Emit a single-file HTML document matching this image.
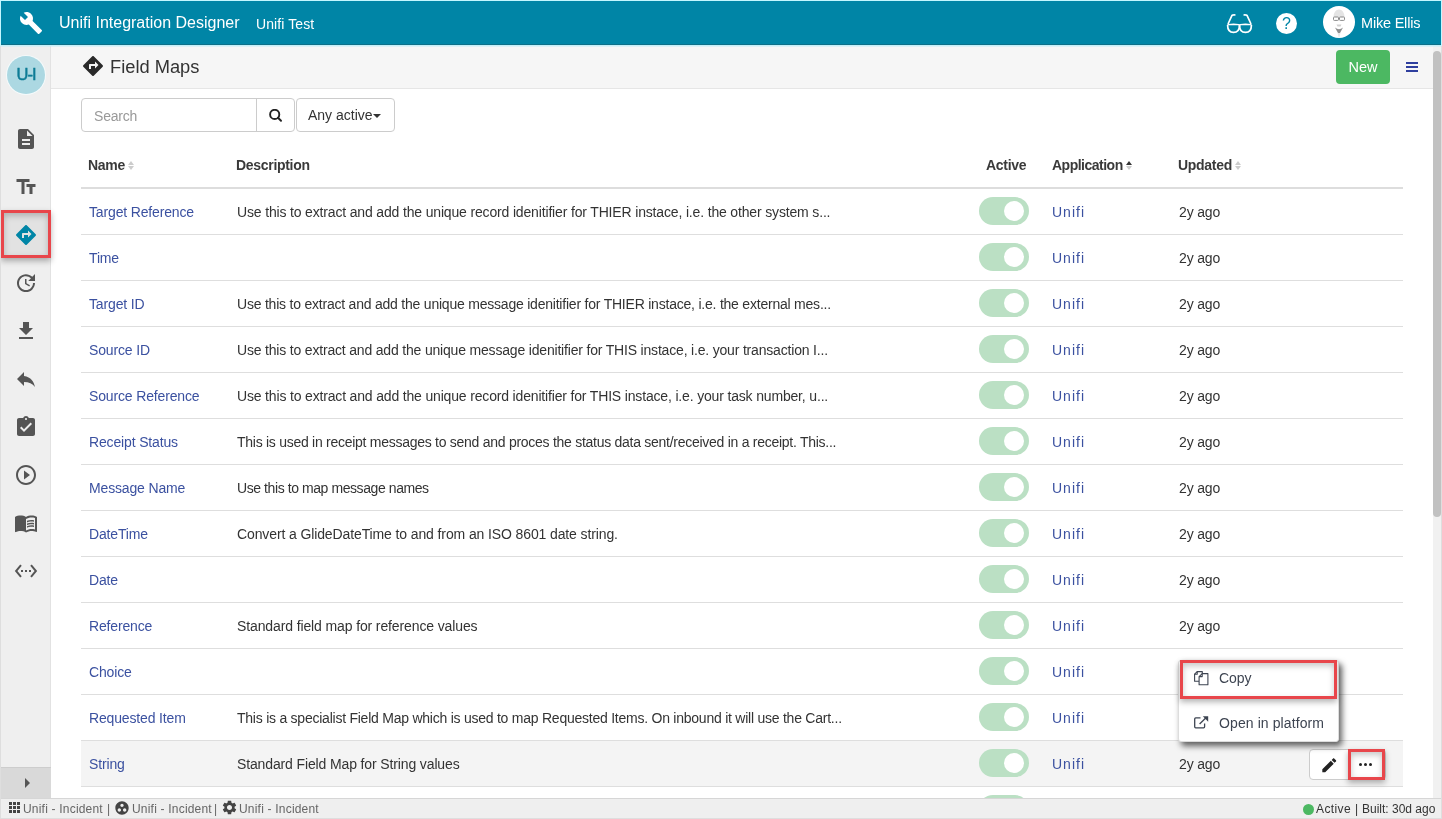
<!DOCTYPE html>
<html><head><meta charset="utf-8">
<style>
*{box-sizing:border-box;margin:0;padding:0}
html,body{width:1442px;height:819px;overflow:hidden;background:#dedede;font-family:"Liberation Sans",sans-serif;}
#frame{position:absolute;left:1px;top:1px;width:1440px;height:817px;background:#fff;overflow:hidden;will-change:transform}
.abs{position:absolute}
#hdr{position:absolute;left:0;top:0;width:1440px;height:44px;background:#0085a6;color:#fff;border-bottom:1px solid #0d6f88;z-index:5}
#hdr .t1{position:absolute;left:58px;top:12px;font-size:16px;line-height:20px;white-space:nowrap}
#hdr .t2{position:absolute;left:255px;top:14px;font-size:14px;letter-spacing:0.1px;line-height:18px;white-space:nowrap}
#hdr .me{position:absolute;left:1360px;top:13px;font-size:14.5px;line-height:18px;white-space:nowrap;letter-spacing:-0.2px}
#side{position:absolute;left:0;top:44px;width:50px;height:753px;background:#efefef;border-right:1px solid #e2e2e2}
#title{position:absolute;left:50px;top:44px;width:1382px;height:44px;background:#f6f6f6;border-bottom:1px solid #e6e6e6}
#title .tx{position:absolute;left:59px;top:11px;font-size:18.3px;line-height:22px;color:#333;white-space:nowrap}
#scroll{position:absolute;left:1432px;top:44px;width:8px;height:753px;background:#f1f1f1}
#thumb{position:absolute;left:0px;top:6px;width:8px;height:466px;background:#c1c1c1;border-radius:4px}
#foot{position:absolute;left:0;top:797px;width:1440px;height:20px;background:#efefef;border-top:1px solid #d6d6d6;font-size:12px;color:#666}
#foot .ft{position:absolute;top:3px;line-height:15px;white-space:nowrap}
.row{position:absolute;left:80px;width:1322px;height:46px;border-bottom:1px solid #dedede;font-size:14px;letter-spacing:-0.15px;color:#333}
.row.hl{background:#f4f4f4}
.row .n{position:absolute;left:8px;top:14px;line-height:18px;color:#3b51a0;white-space:nowrap}
.row .d{position:absolute;left:156px;top:14px;line-height:18px;white-space:nowrap}
.row .a{position:absolute;left:971px;top:14px;line-height:18px;color:#3b51a0;letter-spacing:1px}
.row .u{position:absolute;left:1098px;top:14px;line-height:18px;white-space:nowrap}
.tog{position:absolute;left:898px;top:8px;width:50px;height:28px;border-radius:14px;background:#bbe0c4}
.tog::after{content:"";position:absolute;left:25px;top:4px;width:20px;height:20px;border-radius:50%;background:#fff}
.th{position:absolute;top:155px;font-size:14px;font-weight:bold;line-height:18px;color:#3a3a3a;letter-spacing:-0.3px;white-space:nowrap}
.red{position:absolute;border:3px solid #e8464b;box-shadow:inset 0 3px 6px rgba(0,0,0,.22), 0 3px 6px rgba(0,0,0,.3)}
.srt{position:absolute;width:0;height:0;border-left:3px solid transparent;border-right:3px solid transparent}
</style></head><body>
<div class="abs" style="left:0;top:0;width:1442px;height:46px;background:#c4f7ff"></div>
<div id="frame">
  <div id="hdr">
    <svg class="abs" style="left:18px;top:10px" width="24" height="24" viewBox="0 0 24 24" ><path fill="#fff" d="M22.7 19l-9.1-9.1c.9-2.3.4-5-1.5-6.9-2-2-5-2.4-7.4-1.3L9 6 6 9 1.6 4.7C.4 7.1.9 10.1 2.9 12.1c1.9 1.9 4.6 2.4 6.9 1.5l9.1 9.1c.4.4 1 .4 1.4 0l2.3-2.3c.5-.4.5-1.1.1-1.4z"/></svg>
    <div class="t1">Unifi Integration Designer</div>
    <div class="t2">Unifi Test</div>
    <svg class="abs" style="left:1224px;top:11px" width="29" height="22" viewBox="0 0 29 22"><g fill="none" stroke="#fff" stroke-width="1.7" stroke-linejoin="round"><path d="M2.6 13.2 C2.6 12 14.5 12 14.5 13.2 C14.5 18 12 20.4 8.5 20.4 C5 20.4 2.6 18 2.6 13.2 Z"/><path d="M14.5 13.2 C14.5 12 26.4 12 26.4 13.2 C26.4 18 24 20.4 20.5 20.4 C17 20.4 14.5 18 14.5 13.2 Z"/><path d="M3 12 L7 3.4 Q7.6 2.8 10.5 3"/><path d="M26 12 L22 3.4 Q21.4 2.8 18.5 3"/></g></svg>
    <div class="abs" style="left:1275px;top:12px;width:21px;height:21px;border-radius:50%;background:#fff"></div>
    <div class="abs" style="left:1275px;top:12px;width:21px;height:21px;font-size:16px;line-height:21px;text-align:center;color:#0085a6">?</div>
    <svg class="abs" style="left:1322px;top:5px" width="32" height="32" viewBox="0 0 32 32"><circle cx="16" cy="16" r="16" fill="#fff"/><path d="M10.5 11 Q11 3.5 16 3.5 Q21 3.5 21.5 11 Z" fill="#e4e4e4"/><rect x="10.5" y="11" width="5" height="3.4" rx="0.8" fill="none" stroke="#8a8a8a" stroke-width="1"/><rect x="16.5" y="11" width="5" height="3.4" rx="0.8" fill="none" stroke="#8a8a8a" stroke-width="1"/><path d="M13.5 18.5h5l-1 2h-3z" fill="#cfcfcf"/><path d="M12 21.5 Q16 25 20 21.5 L17 27 Q16 28 15 27 Z" fill="#8f8f8f"/><path d="M14.5 27 L16 32 L17.5 27 Z" fill="#e8e8e8"/></svg>
    <div class="me">Mike Ellis</div>
  </div>
  <div id="side">
    <div class="abs" style="left:6px;top:11px;width:38px;height:38px;border-radius:50%;background:#acd8e2;color:#0e7c96;font-size:16.5px;-webkit-text-stroke:0.5px #0e7c96;line-height:36px;text-align:center;letter-spacing:-1px;box-shadow:0 0 0 1px #f4fafb">U-I</div>
  </div>
  <div class="abs" style="left:0;top:0"><svg class="abs" style="left:13.0px;top:126.0px" width="24" height="24" viewBox="0 0 24 24" ><path fill="#555" d="M14 2H6c-1.1 0-1.99.9-1.99 2L4 20c0 1.1.89 2 1.99 2H18c1.1 0 2-.9 2-2V8l-6-6zm2 16H8v-2h8v2zm0-4H8v-2h8v2zm-3-5V3.5L18.5 9H13z"/></svg><svg class="abs" style="left:13.0px;top:174.0px" width="24" height="24" viewBox="0 0 24 24" ><path fill="#555" d="M2.5 4v3h5v12h3V7h5V4h-13zm19 5h-9v3h3v7h3v-7h3V9z"/></svg><svg class="abs" style="left:13.0px;top:270.0px" width="24" height="24" viewBox="0 0 24 24" ><path fill="#555" d="M21 10.12h-6.78l2.74-2.82c-2.73-2.7-7.15-2.8-9.88-.1-2.73 2.71-2.73 7.08 0 9.79s7.150 2.71 9.88 0C18.32 15.65 19 14.08 19 12.1h2c0 1.98-.88 4.55-2.64 6.29-3.51 3.48-9.21 3.48-12.72 0-3.5-3.47-3.53-9.11-.02-12.58s9.14-3.47 12.65 0L21 3v7.12zM12.5 8v4.25l3.5 2.08-.72 1.21L11 13V8h1.5z"/></svg><svg class="abs" style="left:13.0px;top:318.0px" width="24" height="24" viewBox="0 0 24 24" ><path fill="#555" d="M19 9h-4V3H9v6H5l7 7 7-7zM5 18v2h14v-2H5z"/></svg><svg class="abs" style="left:13.0px;top:366.0px" width="24" height="24" viewBox="0 0 24 24" ><path fill="#555" d="M10 9V5l-7 7 7 7v-4.1c5 0 8.5 1.6 11 5.1-1-5-4-10-11-11z"/></svg><svg class="abs" style="left:13.0px;top:414.0px" width="24" height="24" viewBox="0 0 24 24" ><path fill="#555" d="M19 3h-4.18C14.4 1.84 13.3 1 12 1c-1.3 0-2.4.84-2.82 2H5c-1.1 0-2 .9-2 2v14c0 1.1.9 2 2 2h14c1.1 0 2-.9 2-2V5c0-1.1-.9-2-2-2zm-7 0c.55 0 1 .45 1 1s-.45 1-1 1-1-.45-1-1 .45-1 1-1zm-2 14l-4-4 1.41-1.41L10 14.17l6.59-6.59L18 9l-8 8z"/></svg><svg class="abs" style="left:13.0px;top:462.0px" width="24" height="24" viewBox="0 0 24 24" ><path fill="#555" d="M10 16.5l6-4.5-6-4.5v9zM12 2C6.48 2 2 6.48 2 12s4.48 10 10 10 10-4.48 10-10S17.52 2 12 2zm0 18c-4.41 0-8-3.590-8-8s3.59-8 8-8 8 3.59 8 8-3.59 8-8 8z"/></svg><svg class="abs" style="left:13.0px;top:510.0px" width="24" height="24" viewBox="0 0 24 24" ><path fill="#555" d="M21 5c-1.11-.35-2.33-.5-3.5-.5-1.95 0-4.05.4-5.5 1.5-1.45-1.1-3.55-1.5-5.5-1.5S2.45 4.9 1 6v14.65c0 .25.25.5.5.5.1 0 .15-.05.25-.05C3.1 20.45 5.05 20 6.5 20c1.95 0 4.05.4 5.5 1.5 1.35-.85 3.8-1.5 5.5-1.5 1.65 0 3.35.3 4.75 1.05.1.05.15.05.25.05.25 0 .5-.25.5-.5V6c-.6-.45-1.25-.75-2-1zm0 13.5c-1.1-.35-2.3-.5-3.5-.5-1.7 0-4.15.65-5.5 1.5V8c1.35-.85 3.8-1.5 5.5-1.5 1.2 0 2.4.15 3.5.5v11.5zM17.5 10.5c.88 0 1.73.09 2.5.26V9.24c-.79-.15-1.64-.24-2.5-.24-1.7 0-3.24.29-4.5.83v1.66c1.13-.64 2.7-.99 4.5-.99zM13 12.49v1.66c1.130-.64 2.7-.99 4.5-.99.88 0 1.73.09 2.5.26V11.9c-.79-.15-1.64-.24-2.5-.24-1.7 0-3.24.3-4.5.83zM17.5 14.33c-1.7 0-3.24.29-4.5.83v1.66c1.13-.64 2.7-.99 4.5-.99.88 0 1.73.09 2.5.26v-1.52c-.79-.16-1.64-.24-2.5-.24z"/></svg><svg class="abs" style="left:13.0px;top:558.0px" width="24" height="24" viewBox="0 0 24 24" ><path fill="#555" d="M7.77 6.76L6.23 5.48.82 12l5.41 6.52 1.54-1.28L3.42 12l4.35-5.24zM7 13h2v-2H7v2zm10-2h-2v2h2v-2zm-6 2h2v-2h-2v2zm6.77-7.52l-1.54 1.28L20.58 12l-4.35 5.24 1.54 1.28L23.18 12l-5.41-6.52z"/></svg></div>
  <div class="abs" style="left:3px;top:212px;width:45px;height:42px;background:#e2e2e2"></div>
  <svg class="abs" style="left:13px;top:222px" width="24" height="24" viewBox="0 0 24 24" ><path fill="#0085a6" d="M21.71 11.29l-9-9c-.39-.39-1.02-.39-1.41 0l-9 9c-.39.39-.39 1.02 0 1.41l9 9c.39.39 1.02.39 1.41 0l9-9c.39-.38.39-1.01 0-1.41zM14 14.5V12h-4v3H8v-4c0-.55.45-1 1-1h5V7.5l3.5 3.5-3.5 3.5z"/></svg>
  <div class="red" style="left:0px;top:209px;width:50px;height:48px"></div>
  <div class="abs" style="left:0;top:766px;width:50px;height:31px;background:#d9d9d9;border-top:1px solid #cdcdcd"></div>
  <div class="abs" style="left:24px;top:777px;width:0;height:0;border-top:5px solid transparent;border-bottom:5px solid transparent;border-left:5px solid #555"></div>
  <div id="title">
    <div class="tx">Field Maps</div>
    <div class="abs" style="left:1285px;top:5px;width:54px;height:34px;border-radius:4px;background:#4cb862;color:#fff;font-size:14.5px;line-height:34px;text-align:center">New</div>
    <div class="abs" style="left:1355px;top:17px;width:12px;height:2px;background:#2f3f9e"></div>
    <div class="abs" style="left:1355px;top:21px;width:12px;height:2px;background:#2f3f9e"></div>
    <div class="abs" style="left:1355px;top:25px;width:12px;height:2px;background:#2f3f9e"></div>
  </div>
  <svg class="abs" style="left:80px;top:53px" width="24" height="24" viewBox="0 0 24 24" ><path fill="#2a2a2a" d="M21.71 11.29l-9-9c-.39-.39-1.02-.39-1.41 0l-9 9c-.39.39-.39 1.02 0 1.41l9 9c.39.39 1.02.39 1.41 0l9-9c.39-.38.39-1.01 0-1.41zM14 14.5V12h-4v3H8v-4c0-.55.45-1 1-1h5V7.5l3.5 3.5-3.5 3.5z"/></svg>
  <!-- search -->
  <div class="abs" style="left:80px;top:97px;width:214px;height:34px;border:1px solid #ccc;border-radius:4px;background:#fff"></div>
  <div class="abs" style="left:255px;top:97px;width:1px;height:34px;background:#ccc"></div>
  <div class="abs" style="left:93px;top:106px;font-size:14px;line-height:18px;color:#999;letter-spacing:-0.2px">Search</div>
  <svg class="abs" style="left:268px;top:108px" width="14" height="14" viewBox="0 0 14 14"><circle cx="5.7" cy="5.4" r="4.6" fill="none" stroke="#222" stroke-width="1.9"/><path d="M9 8.8 L12 11.8" stroke="#222" stroke-width="2" stroke-linecap="round"/></svg>
  <div class="abs" style="left:295px;top:97px;width:99px;height:34px;border:1px solid #ccc;border-radius:4px;background:#fff"></div>
  <div class="abs" style="left:307px;top:105px;font-size:14px;line-height:18px;color:#333;letter-spacing:0px">Any active</div>
  <div class="abs" style="left:372px;top:113px;width:0;height:0;border-left:4px solid transparent;border-right:4px solid transparent;border-top:4px solid #333"></div>
  <!-- table header -->
  <div class="th" style="left:87px">Name</div>
  <div class="srt" style="left:127px;top:160px;border-bottom:4px solid #ccc"></div>
  <div class="srt" style="left:127px;top:165px;border-top:4px solid #ccc"></div>
  <div class="th" style="left:235px">Description</div>
  <div class="th" style="left:985px">Active</div>
  <div class="th" style="left:1051px;letter-spacing:-0.5px">Application</div>
  <div class="srt" style="left:1125px;top:160px;border-bottom:4px solid #333"></div>
  <div class="srt" style="left:1125px;top:165px;border-top:4px solid #ccc"></div>
  <div class="th" style="left:1177px">Updated</div>
  <div class="srt" style="left:1234px;top:160px;border-bottom:4px solid #ccc"></div>
  <div class="srt" style="left:1234px;top:165px;border-top:4px solid #ccc"></div>
  <div class="abs" style="left:80px;top:186px;width:1322px;height:2px;background:#ddd"></div>
  <div class="row" style="top:188px"><div class="n">Target Reference</div><div class="d" style="letter-spacing:-0.160px">Use this to extract and add the unique record idenitifier for THIER instace, i.e. the other system s...</div><div class="tog"></div><div class="a">Unifi</div><div class="u">2y ago</div></div>
  <div class="row" style="top:234px"><div class="n">Time</div><div class="tog"></div><div class="a">Unifi</div><div class="u">2y ago</div></div>
  <div class="row" style="top:280px"><div class="n">Target ID</div><div class="d" style="letter-spacing:-0.217px">Use this to extract and add the unique message idenitifier for THIER instace, i.e. the external mes...</div><div class="tog"></div><div class="a">Unifi</div><div class="u">2y ago</div></div>
  <div class="row" style="top:326px"><div class="n">Source ID</div><div class="d" style="letter-spacing:-0.184px">Use this to extract and add the unique message idenitifier for THIS instace, i.e. your transaction I...</div><div class="tog"></div><div class="a">Unifi</div><div class="u">2y ago</div></div>
  <div class="row" style="top:372px"><div class="n">Source Reference</div><div class="d" style="letter-spacing:-0.167px">Use this to extract and add the unique record idenitifier for THIS instace, i.e. your task number, u...</div><div class="tog"></div><div class="a">Unifi</div><div class="u">2y ago</div></div>
  <div class="row" style="top:418px"><div class="n">Receipt Status</div><div class="d" style="letter-spacing:-0.270px">This is used in receipt messages to send and proces the status data sent/received in a receipt. This...</div><div class="tog"></div><div class="a">Unifi</div><div class="u">2y ago</div></div>
  <div class="row" style="top:464px"><div class="n">Message Name</div><div class="d" style="letter-spacing:-0.42px">Use this to map message names</div><div class="tog"></div><div class="a">Unifi</div><div class="u">2y ago</div></div>
  <div class="row" style="top:510px"><div class="n">DateTime</div><div class="d" style="letter-spacing:-0.115px">Convert a GlideDateTime to and from an ISO 8601 date string.</div><div class="tog"></div><div class="a">Unifi</div><div class="u">2y ago</div></div>
  <div class="row" style="top:556px"><div class="n">Date</div><div class="tog"></div><div class="a">Unifi</div><div class="u">2y ago</div></div>
  <div class="row" style="top:602px"><div class="n">Reference</div><div class="d" style="letter-spacing:-0.120px">Standard field map for reference values</div><div class="tog"></div><div class="a">Unifi</div><div class="u">2y ago</div></div>
  <div class="row" style="top:648px"><div class="n">Choice</div><div class="tog"></div><div class="a">Unifi</div><div class="u">2y ago</div></div>
  <div class="row" style="top:694px"><div class="n">Requested Item</div><div class="d" style="letter-spacing:-0.240px">This is a specialist Field Map which is used to map Requested Items. On inbound it will use the Cart...</div><div class="tog"></div><div class="a">Unifi</div><div class="u">2y ago</div></div>
  <div class="row hl" style="top:740px"><div class="n">String</div><div class="d" style="letter-spacing:-0.130px">Standard Field Map for String values</div><div class="tog"></div><div class="a">Unifi</div><div class="u">2y ago</div></div>
  <div class="row" style="top:786px"><div class="tog"></div></div>
  <!-- action buttons -->
  <div class="abs" style="left:1308px;top:748px;width:77px;height:31px;border:1px solid #ccc;border-radius:4px;background:#fff"></div>
  <svg class="abs" style="left:1318.5px;top:755px" width="18.5" height="18.5" viewBox="0 0 24 24" ><path fill="#222" d="M3 17.25V21h3.75L17.81 9.94l-3.75-3.75L3 17.25zM20.71 7.04c.39-.39.39-1.02 0-1.41l-2.34-2.34c-.39-.39-1.02-.39-1.41 0l-1.83 1.83 3.75 3.75 1.83-1.83z"/></svg>
  <div class="red" style="left:1347px;top:748px;width:37px;height:31px;background:#fff"></div>
  <div class="abs" style="left:1358px;top:762px;width:3px;height:3px;border-radius:50%;background:#222"></div>
  <div class="abs" style="left:1363px;top:762px;width:3px;height:3px;border-radius:50%;background:#222"></div>
  <div class="abs" style="left:1368px;top:762px;width:3px;height:3px;border-radius:50%;background:#222"></div>
  <!-- popup -->
  <div class="abs" style="left:1177px;top:659px;width:161px;height:82px;background:#fff;border:1px solid #ddd;border-radius:3px;box-shadow:3px 4px 6px rgba(0,0,0,.62)"></div>
  <svg class="abs" style="left:1193px;top:670px" width="16" height="16" viewBox="0 0 16 16"><g fill="none" stroke="#3d4451" stroke-width="1.1" stroke-linejoin="round"><path d="M5 10.2 H0.6 V3.2 L3.2 0.6 H8.3 V2.6"/><path d="M0.6 3.2 H3.2 V0.6"/><path d="M8.2 2.6 H13.9 V13.8 H5.1 V5.6 Z"/><path d="M5.1 5.6 H8.2 V2.6"/></g></svg>
  <div class="abs" style="left:1218px;top:668px;font-size:14px;line-height:18px;color:#3d4451;letter-spacing:-0.1px">Copy</div>
  <div class="red" style="left:1179px;top:659px;width:157px;height:39px"></div>
  <svg class="abs" style="left:1193px;top:715px" width="16" height="16" viewBox="0 0 16 16"><g fill="none" stroke="#3d4451" stroke-width="1.3"><path d="M6.5 1.9 H1.7 Q0.7 1.9 0.7 2.9 V10.8 Q0.7 11.8 1.7 11.8 H9.6 Q10.6 11.8 10.6 10.8 V7.5"/><path d="M5.6 8 L12 1.8"/></g><path d="M8.8 0.3 H14.2 V5.7 Z" fill="#3d4451"/></svg>
  <div class="abs" style="left:1218px;top:713px;font-size:14px;line-height:18px;color:#3d4451;letter-spacing:0.1px">Open in platform</div>
  <div id="scroll"><div id="thumb"></div></div>
  <div class="abs" style="left:0;top:44px;width:1440px;height:1px;background:#c4f0f8;z-index:6"></div>
  <div class="abs" style="left:0;top:45px;width:1440px;height:1px;background:rgba(200,235,245,.55);z-index:6"></div>
  <div id="foot">
    <svg class="abs" style="left:8px;top:3px" width="11" height="11" viewBox="0 0 11 11" fill="#444"><rect x="0" y="0" width="3" height="3"/><rect x="4" y="0" width="3" height="3"/><rect x="8" y="0" width="3" height="3"/><rect x="0" y="4" width="3" height="3"/><rect x="4" y="4" width="3" height="3"/><rect x="8" y="4" width="3" height="3"/><rect x="0" y="8" width="3" height="3"/><rect x="4" y="8" width="3" height="3"/><rect x="8" y="8" width="3" height="3"/></svg>
    <div class="ft" style="left:22px;letter-spacing:0.2px">Unifi - Incident</div>
    <div class="ft" style="left:106px">|</div>
    <svg class="abs" style="left:113px;top:1px" width="16" height="16" viewBox="0 0 24 24" ><path fill="#444" d="M12 2C6.48 2 2 6.48 2 12s4.48 10 10 10 10-4.48 10-10S17.52 2 12 2zM8 17.5c-1.38 0-2.5-1.12-2.5-2.5s1.12-2.5 2.5-2.5 2.5 1.12 2.5 2.5-1.12 2.5-2.5 2.5zM9.5 8c0-1.38 1.12-2.5 2.5-2.5s2.5 1.12 2.5 2.5-1.12 2.5-2.5 2.5S9.5 9.38 9.5 8zm6.5 9.5c-1.38 0-2.5-1.12-2.5-2.5s1.12-2.5 2.5-2.5 2.5 1.12 2.5 2.5-1.12 2.5-2.5 2.5z"/></svg>
    <div class="ft" style="left:131px;letter-spacing:0.2px">Unifi - Incident</div>
    <div class="ft" style="left:213px">|</div>
    <svg class="abs" style="left:220px;top:0px" width="17" height="17" viewBox="0 0 24 24" ><path fill="#444" d="M19.14 12.94c.04-.3.06-.61.06-.94 0-.32-.02-.64-.07-.94l2.03-1.58c.18-.14.23-.41.12-.61l-1.92-3.32c-.12-.22-.37-.29-.59-.22l-2.39.96c-.5-.38-1.03-.7-1.62-.94l-.36-2.54c-.04-.24-.24-.41-.48-.41h-3.84c-.24 0-.43.17-.47.41l-.36 2.54c-.59.24-1.13.57-1.62.94l-2.39-.96c-.22-.08-.47 0-.59.22L2.74 8.87c-.12.21-.08.47.12.61l2.03 1.58c-.05.3-.09.63-.09.94s.02.64.07.94l-2.03 1.58c-.18.14-.23.41-.12.61l1.92 3.32c.12.22.37.29.59.22l2.39-.96c.5.38 1.03.7 1.62.94l.36 2.54c.05.24.24.41.48.41h3.84c.24 0 .44-.17.47-.41l.36-2.54c.59-.24 1.13-.56 1.62-.94l2.39.96c.22.08.47 0 .59-.22l1.92-3.32c.12-.22.07-.47-.12-.61l-2.010-1.58zM12 15.6c-1.98 0-3.6-1.62-3.6-3.6s1.62-3.6 3.6-3.6 3.6 1.62 3.6 3.6-1.62 3.6-3.6 3.6z"/></svg>
    <div class="ft" style="left:238px;letter-spacing:0.2px">Unifi - Incident</div>
    <div class="abs" style="left:1302px;top:5px;width:11px;height:11px;border-radius:50%;background:#4cb862"></div>
    <div class="ft" style="left:1315px;color:#333;letter-spacing:0.4px">Active</div><div class="ft" style="left:1354px;color:#333">|</div><div class="ft" style="left:1361px;color:#333;letter-spacing:0px">Built: 30d ago</div>
  </div>
</div>
</body></html>
